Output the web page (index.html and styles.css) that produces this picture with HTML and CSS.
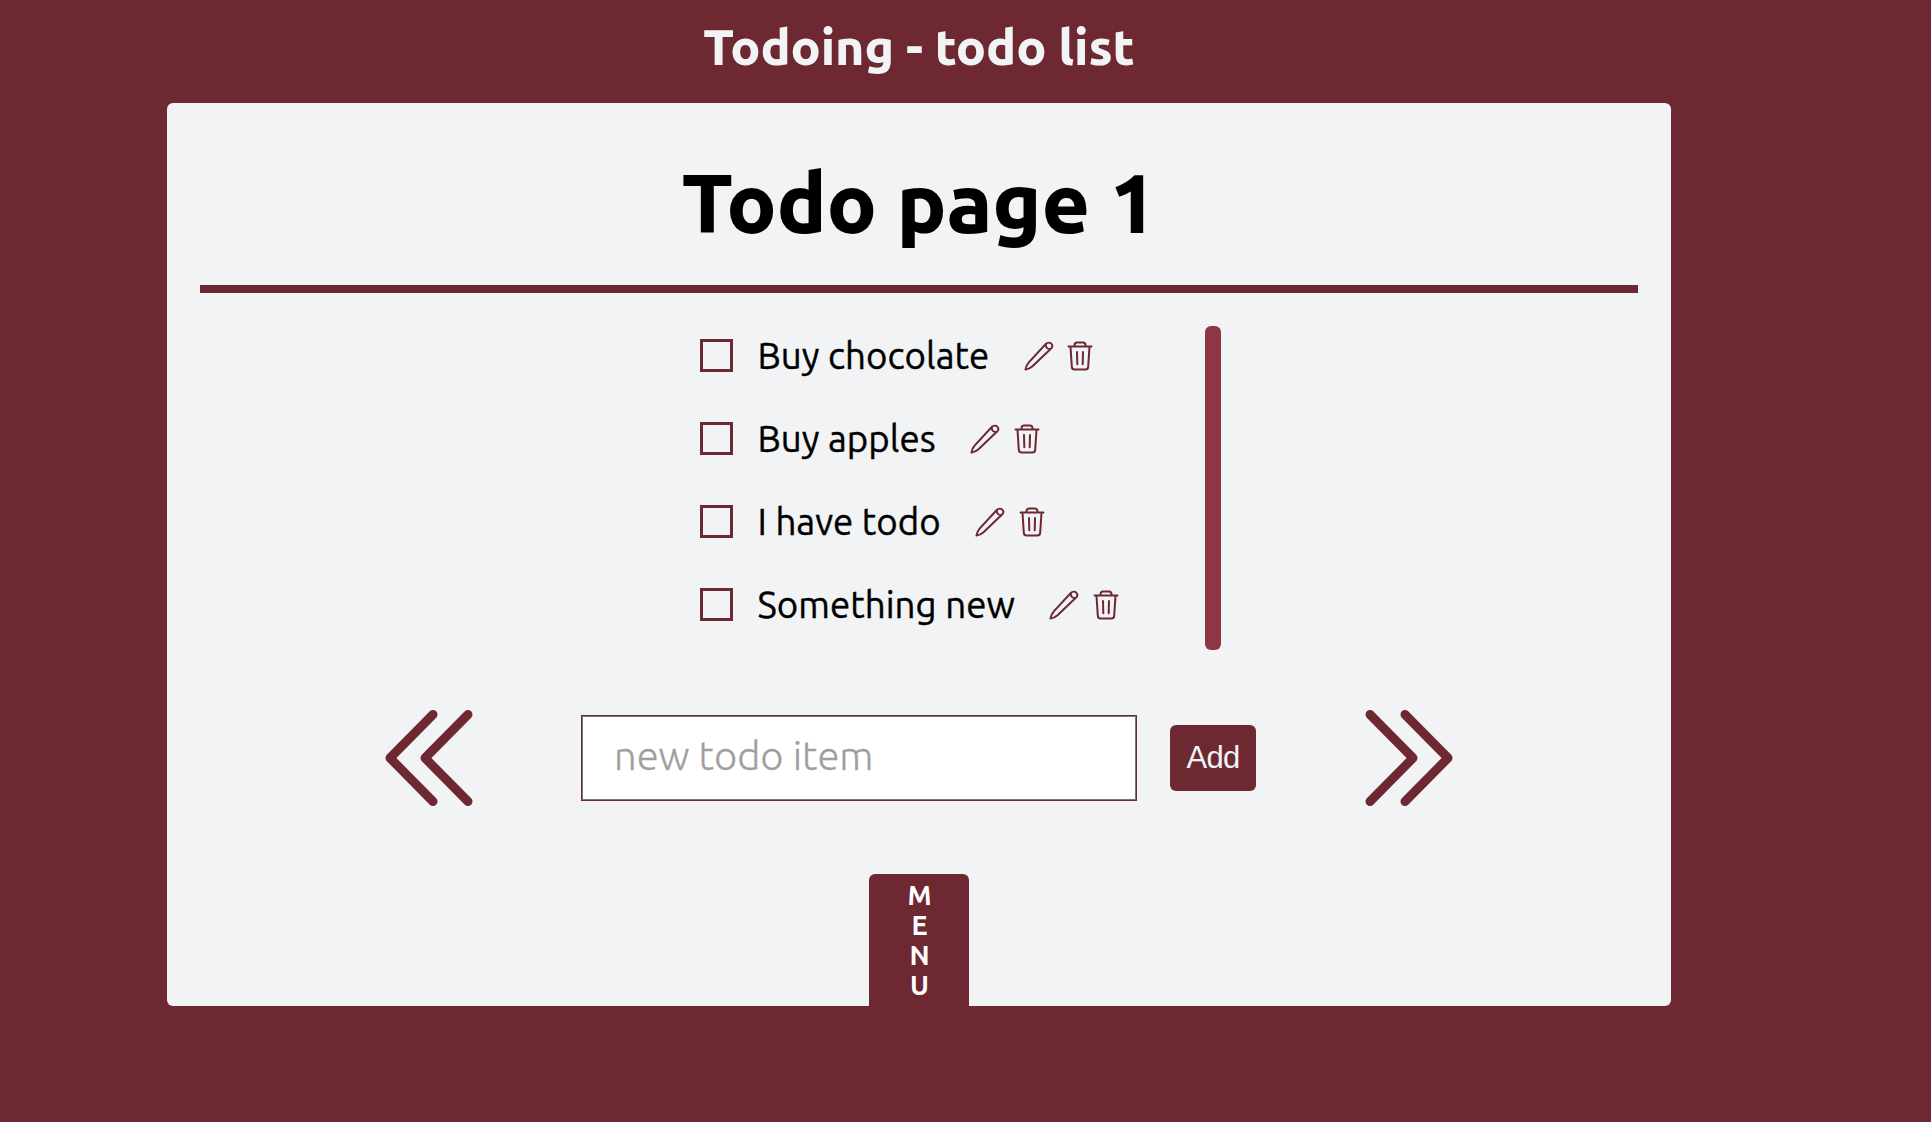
FILE: index.html
```html
<!DOCTYPE html>
<html lang="en">
<head>
<meta charset="utf-8">
<title>Todoing - todo list</title>
<link rel="stylesheet" href="styles.css">
</head>
<body>
<svg class="sprite" aria-hidden="true">
  <symbol id="pencil" viewBox="0 0 30 30">
    <path d="M1.500 28.500C1.800 25.700 3 23.300 4.800 21.300L22 2.800C23.500 1.300 25.800 1.300 27.200 2.600C28.600 4 28.500 6.100 27.100 7.500L8.500 25.200C6.500 27 4.300 28.100 1.500 28.500Z M21.900 3.300C21.300 6 23.600 8.500 26.500 7.900"/>
  </symbol>
  <symbol id="trash" viewBox="0 0 26 30">
    <path d="M1.500 5.600H24.500M7.500 5.400V4.200C7.500 2.500 8.300 1.500 10 1.500H16C17.700 1.500 18.500 2.500 18.500 4.200V5.400M3.500 5.900L4.800 25.600C4.900 27.400 5.900 28.500 7.700 28.500H18.300C20.100 28.500 21.100 27.400 21.200 25.600L22.500 5.900M10 11L10.300 23.300M16 11L15.700 23.300"/>
  </symbol>
  <symbol id="chevrons" viewBox="0 0 88 96">
    <path d="M5 4.500L48 48L5 91.500M40 4.500L83 48L40 91.500"/>
  </symbol>
</svg>
<div class="app">
  <h1 class="brand">Todoing - todo list</h1>
  <main class="card">
    <h2 class="page-title">Todo page 1</h2>
    <div class="list-area">
      <ul class="todos">
        <li class="todo"><span class="box"></span><span class="label">Buy chocolate</span><svg class="pencil"><use href="#pencil"/></svg><svg class="trash"><use href="#trash"/></svg></li>
        <li class="todo"><span class="box"></span><span class="label">Buy apples</span><svg class="pencil"><use href="#pencil"/></svg><svg class="trash"><use href="#trash"/></svg></li>
        <li class="todo"><span class="box"></span><span class="label">I have todo</span><svg class="pencil"><use href="#pencil"/></svg><svg class="trash"><use href="#trash"/></svg></li>
        <li class="todo"><span class="box"></span><span class="label">Something new</span><svg class="pencil"><use href="#pencil"/></svg><svg class="trash"><use href="#trash"/></svg></li>
      </ul>
      <div class="scrollbar"></div>
    </div>
    <div class="controls">
      <svg class="arrow prev"><use href="#chevrons"/></svg>
      <div class="entry">
        <input class="field" type="text" placeholder="new todo item">
        <button class="add" type="button">Add</button>
      </div>
      <svg class="arrow"><use href="#chevrons"/></svg>
    </div>
    <div class="menu"><span>M</span><span>E</span><span>N</span><span>U</span></div>
  </main>
</div>
</body>
</html>
```
FILE: styles.css
```css
* {
  box-sizing: border-box;
}

body {
  margin: 0;
  min-height: 100vh;
  background: #6d2832;
  font-family: "Ubuntu", "Noto Sans", sans-serif;
}

.sprite {
  display: none;
}

.app {
  width: 1504px;
  margin-left: 167px;
}

.brand {
  margin: 0;
  height: 103px;
  padding-top: 10px;
  color: #f1f3f5;
  font-size: 50px;
  font-weight: 800;
  line-height: 72px;
  letter-spacing: -0.1px;
  text-align: center;
}

.card {
  display: flex;
  flex-direction: column;
  height: 903px;
  padding: 0 33px;
  background: #f1f3f5;
  border-radius: 6px;
}

.page-title {
  margin: 0;
  height: 190px;
  padding-top: 38px;
  border-bottom: 8px solid #6d2832;
  font-size: 83.33px;
  font-weight: 800;
  line-height: 122px;
  letter-spacing: -0.3px;
  text-align: center;
}

.list-area {
  display: flex;
  justify-content: space-between;
  width: 521px;
  height: 324px;
  margin: 33px 0 0 500px;
}

.todos {
  margin: 0;
  padding: 0;
  list-style: none;
}

.todo {
  display: flex;
  align-items: center;
  height: 83px;
  padding-bottom: 24px;
}

.box {
  width: 33px;
  height: 33px;
  border: 3px solid #6d2832;
  margin-right: 24.5px;
}

.label {
  font-size: 36.67px;
  font-weight: 400;
  line-height: 50px;
  letter-spacing: 0.05px;
  -webkit-text-stroke: 0.4px #000;
  white-space: nowrap;
}

.pencil,
.trash,
.arrow {
  flex: none;
  fill: none;
  stroke: #6d2832;
  stroke-linecap: round;
  stroke-linejoin: round;
}

.pencil {
  width: 30px;
  height: 30px;
  margin-left: 34.5px;
  stroke-width: 2;
}

.trash {
  width: 26px;
  height: 30px;
  margin-left: 13.5px;
  stroke-width: 2;
}

.scrollbar {
  width: 16px;
  height: 324px;
  border-radius: 6px;
  background: #8f3645;
}

.controls {
  display: flex;
  align-items: center;
  justify-content: space-between;
  height: 96px;
  margin: 60px 185px 0 185px;
}

.arrow {
  width: 88px;
  height: 96px;
  stroke-width: 9;
}

.prev {
  transform: scaleX(-1);
}

.entry {
  display: flex;
  align-items: center;
  gap: 33px;
  margin-right: 1px;
}

.field {
  width: 556px;
  height: 86px;
  padding: 0 32px 5px;
  border: 1px solid #6d2832;
  box-shadow: inset 0 0 0 1px #717b79;
  background: #fff;
  font: 300 40px "Ubuntu", "Noto Sans", sans-serif;
}

.field::placeholder {
  color: #9f9f9f;
  -webkit-text-stroke: 0.3px #9f9f9f;
}

.add {
  width: 86px;
  height: 66px;
  padding: 0;
  border: 0;
  border-radius: 6px;
  background: #6d2832;
  color: #f1f3f5;
  font: 31px "Liberation Sans", Arial, sans-serif;
  letter-spacing: -0.8px;
}

.menu {
  display: flex;
  flex-direction: column;
  align-items: center;
  align-self: center;
  width: 100px;
  height: 132px;
  margin-top: auto;
  padding: 6px 0 0 1px;
  border-radius: 6px 6px 0 0;
  background: #6d2832;
  color: #fff;
  font-size: 27px;
  font-weight: 600;
  line-height: 30px;
}
```
